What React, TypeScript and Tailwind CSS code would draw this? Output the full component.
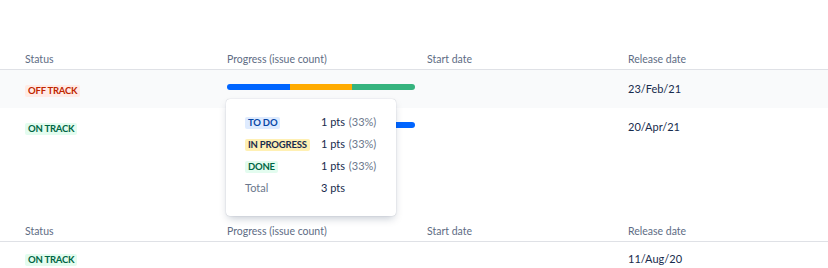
import React from 'react';

type Tone = 'red' | 'green' | 'blue' | 'yellow';

const toneClass: Record<Tone, string> = {
  red: 'bg-[#ffebe6] text-[#bf2600]',
  green: 'bg-[#e3fcef] text-[#006644]',
  blue: 'bg-[#deebff] text-[#0747a6]',
  yellow: 'bg-[#fff0b3] text-[#172b4d]',
};

const Lozenge: React.FC<{ tone: Tone; children: React.ReactNode }> = ({ tone, children }) => (
  <span className={`inline-flex h-[12px] items-center rounded-[2px] px-[3px] text-[9.5px] font-bold uppercase leading-none tracking-[-0.2px] ${toneClass[tone]}`}>
    {children}
  </span>
);

const cols = 'grid grid-cols-[202px_200px_201px_1fr] pl-[25px]';

const Header: React.FC = () => (
  <div className={`${cols} h-[20px] items-center border-b border-[#dfe1e6] text-[10.5px] text-[#5e6c84]`}>
    <div>Status</div>
    <div>Progress (issue count)</div>
    <div>Start date</div>
    <div>Release date</div>
  </div>
);

const Bar: React.FC<{ parts: { color: string; pct: number }[] }> = ({ parts }) => (
  <div className="mb-[4px] flex h-[6px] w-[188px] overflow-hidden rounded-[3px]">
    {parts.map((p, i) => (
      <div key={i} className={p.color} style={{ width: `${p.pct}%` }} />
    ))}
  </div>
);

const Popup: React.FC = () => {
  const rows = [
    { label: 'To do', tone: 'blue' as Tone },
    { label: 'In progress', tone: 'yellow' as Tone },
    { label: 'Done', tone: 'green' as Tone },
  ];
  return (
    <div className="absolute left-[226px] top-[99px] z-10 h-[117px] w-[170px] rounded-[4px] bg-white pl-[19px] pt-[12px] shadow-[0_4px_8px_-2px_rgba(9,30,66,0.25),0_0_1px_rgba(9,30,66,0.31)]">
      <div className="grid grid-cols-[76px_1fr] auto-rows-[22px] items-center text-[11px] text-[#172b4d]">
        {rows.map((r) => (
          <React.Fragment key={r.label}>
            <div><Lozenge tone={r.tone}>{r.label}</Lozenge></div>
            <div>1 pts <span className="ml-[1px] text-[#6b778c]">(33%)</span></div>
          </React.Fragment>
        ))}
        <div className="text-[#6b778c]">Total</div>
        <div>3 pts</div>
      </div>
    </div>
  );
};

export default function App() {
  return (
    <div className="relative h-[268px] w-[828px] overflow-hidden bg-white pt-[50px] font-['Lato','Noto_Sans',sans-serif]">
      <Header />
      <div className={`${cols} h-[38px] items-center bg-[#f9fafb] text-[11px] text-[#172b4d]`}>
        <div className="pt-[3px]"><Lozenge tone="red">Off track</Lozenge></div>
        <div>
          <Bar parts={[
            { color: 'bg-[#0065ff]', pct: 33.4 },
            { color: 'bg-[#ffab00]', pct: 33.3 },
            { color: 'bg-[#36b37e]', pct: 33.3 },
          ]} />
        </div>
        <div />
        <div>23/Feb/21</div>
      </div>
      <div className={`${cols} h-[38px] items-center text-[11px] text-[#172b4d]`}>
        <div className="pt-[3px]"><Lozenge tone="green">On track</Lozenge></div>
        <div>
          <Bar parts={[{ color: 'bg-[#0065ff]', pct: 100 }]} />
        </div>
        <div />
        <div>20/Apr/21</div>
      </div>
      <div className="h-[76px]" />
      <Header />
      <div className={`${cols} h-[34px] items-center text-[11px] text-[#172b4d]`}>
        <div><Lozenge tone="green">On track</Lozenge></div>
        <div />
        <div />
        <div>11/Aug/20</div>
      </div>
      <Popup />
    </div>
  );
}
